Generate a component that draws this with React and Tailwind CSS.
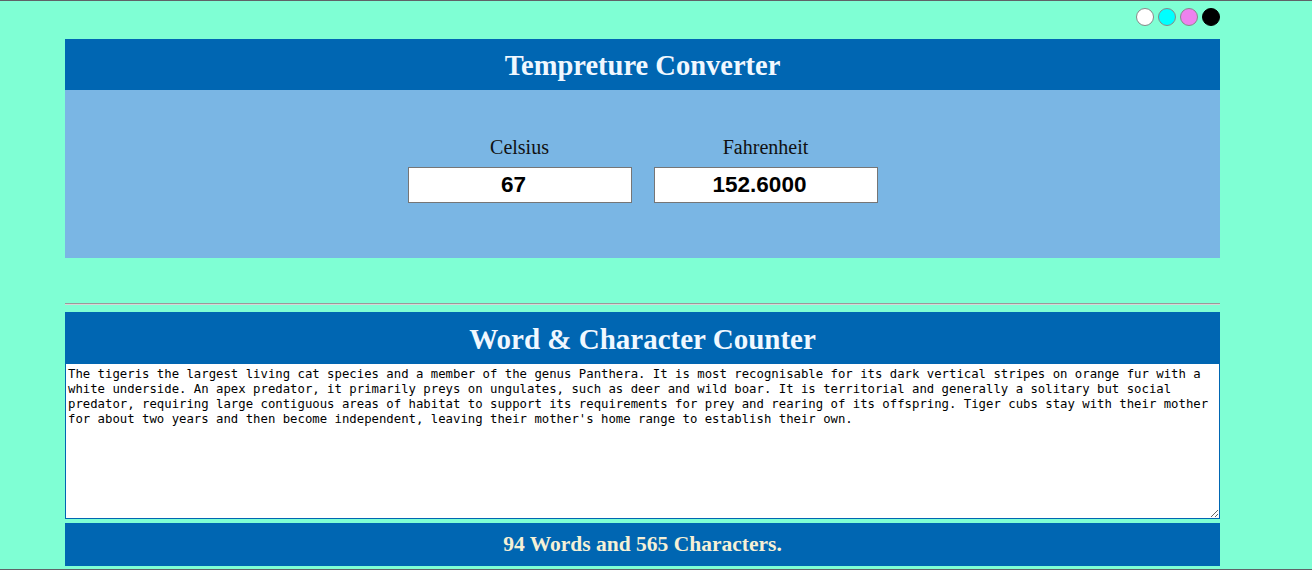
import React, { useState } from "react";

const TIGER =
  "The tigeris the largest living cat species and a member of the genus Panthera. It is most recognisable for its dark vertical stripes on orange fur with a white underside. An apex predator, it primarily preys on ungulates, such as deer and wild boar. It is territorial and generally a solitary but social predator, requiring large contiguous areas of habitat to support its requirements for prey and rearing of its offspring. Tiger cubs stay with their mother for about two years and then become independent, leaving their mother's home range to establish their own.";

// ---------- Theme dots ----------
function ThemeDots() {
  return (
    <div className="flex justify-end gap-[4px] pt-[7px] pr-[92px] h-[38px]">
      <span className="w-[18px] h-[18px] rounded-full bg-white border border-[#888]" />
      <span className="w-[18px] h-[18px] rounded-full bg-[#00ffff] border border-[#888]" />
      <span className="w-[18px] h-[18px] rounded-full bg-[#ee82ee] border border-[#888]" />
      <span className="w-[18px] h-[18px] rounded-full bg-black border border-black" />
    </div>
  );
}

// ---------- Section header ----------
function Banner({ size, children }) {
  return (
    <div className="h-[51px] bg-[#0066b2] flex items-center justify-center pt-[3px]">
      <h1
        className={
          (size === "lg" ? "text-[29px] " : "text-[28.5px] ") +
          "font-bold text-[#f0f8ff] font-['Liberation_Serif',serif] leading-none"
        }
      >
        {children}
      </h1>
    </div>
  );
}

function Field({ label, value }) {
  return (
    <div className="flex flex-col items-center gap-[8px]">
      <label className="text-[20px] leading-[24px] text-[#111] font-['Liberation_Serif',serif]">
        {label}
      </label>
      <input
        readOnly
        value={value}
        className="w-[224px] h-[36px] bg-white border border-[#767676] pr-[12px] text-center text-[22.5px] font-bold text-black font-['Liberation_Sans',Arial,sans-serif] outline-none"
      />
    </div>
  );
}

export default function App() {
  const [text] = useState(TIGER);
  const words = 94;
  const chars = text.length;

  return (
    <div className="w-[1312px] h-[570px] bg-[#7fffd4] border-t border-b border-[#5f6368] overflow-hidden">
      <ThemeDots />
      <div className="ml-[65px] w-[1155px]">
        <Banner>Tempreture Converter</Banner>
        <div className="h-[168px] bg-[#7ab6e4] flex justify-center gap-[22px] pt-[45px]">
          <Field label="Celsius" value="67" />
          <Field label="Fahrenheit" value="152.6000" />
        </div>
        <div className="h-[45px]" />
        <div className="border-t border-t-[#9a9a9a] border-b border-b-[#d6d6d6] h-[2px]" />
        <div className="h-[7px]" />
        <Banner size="lg">Word &amp; Character Counter</Banner>
        <textarea
          readOnly
          value={text}
          className="block w-[1155px] h-[156px] bg-white border border-[#0066b2] px-[2px] pt-[3px] text-[12.3px] leading-[15px] text-black font-['DejaVu_Sans_Mono',monospace] outline-none"
        />
        <div className="h-[4px]" />
        <div className="h-[43px] bg-[#0066b2] flex items-center justify-center">
          <h3 className="text-[21.5px] font-bold text-[#f5f0d6] font-['Liberation_Serif',serif]">
            {words} Words and {chars} Characters.
          </h3>
        </div>
      </div>
    </div>
  );
}
